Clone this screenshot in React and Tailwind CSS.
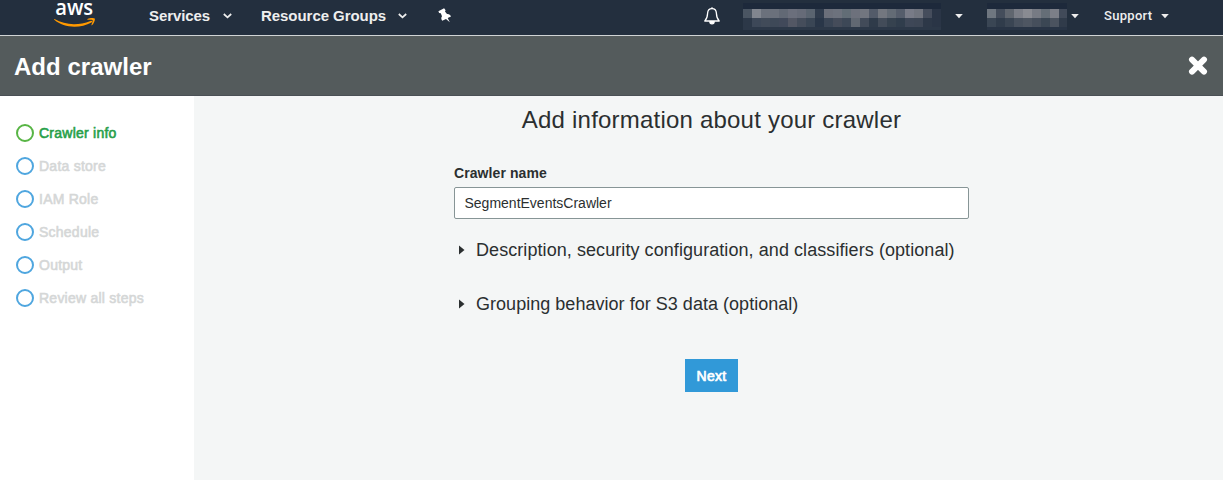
import React from "react";

const steps = ["Crawler info", "Data store", "IAM Role", "Schedule", "Output", "Review all steps"];

const accountCells = [
  ["#4a5562", "#81868f", "#6b717c", "#6b717c", "#626975", "#6b6f7c", "#666b78", "#5a6470", "#303c4d", "#6b6f7a", "#6d727d", "#626d76", "#6d717c", "#72767f", "#535b69", "#73777f", "#636b75", "#555d6b", "#787b87", "#71757f", "#454d5c", "#2a3546"],
  ["#2c3848", "#3d4858", "#414b59", "#3e4958", "#41495a", "#535764", "#454d5b", "#3a4655", "#293648", "#3a4555", "#454c5a", "#3d4857", "#616872", "#424b59", "#2f3b4a", "#434c59", "#36424f", "#303d4c", "#3e4757", "#3d4655", "#2d3848", "#2a3546"],
];

const regionCells = [
  ["#6f7780", "#444d5b", "#60666f", "#7b7e87", "#898b92", "#777b84", "#656e77", "#7c7f88", "#414a59"],
  ["#3a4654", "#303c4b", "#3a4553", "#48515e", "#4e5662", "#464f5c", "#3b4754", "#4b535f", "#303b4a"],
];

function Mosaic({ rows, className }) {
  return (
    <div className={`flex shrink-0 flex-col overflow-hidden border-t-[6px] border-b-[3px] border-t-[#1d293b] ${className}`}>
      {rows.map((row, r) => (
        <div key={r} className="flex h-[9px]">
          {row.map((color, i) => (
            <div key={i} className="h-[9px] w-[9px] shrink-0" style={{ backgroundColor: color }} />
          ))}
        </div>
      ))}
    </div>
  );
}

function Chevron({ className }) {
  return (
    <svg className={className} width="9" height="6" viewBox="0 0 9 6" fill="none" stroke="#eee" strokeWidth="1.7">
      <path d="M0.8 1 4.5 4.4 8.2 1" />
    </svg>
  );
}

function Caret({ className }) {
  return (
    <svg className={className} width="8" height="5" viewBox="0 0 8 5" fill="#eee">
      <path d="M0.2 0.1h7.6L4 4.3z" />
    </svg>
  );
}

function Section({ children, className }) {
  return (
    <div className={`flex h-6 items-center ${className}`}>
      <svg className="mr-[11px] ml-[5px] shrink-0" width="6" height="10" viewBox="0 0 6 10" fill="#2b2f30">
        <path d="M0 0.5 5.5 5 0 9.5z" />
      </svg>
      <span className="text-[18px] leading-6 whitespace-nowrap">{children}</span>
    </div>
  );
}

export default function App() {
  return (
    <div className="flex h-[480px] w-[1223px] flex-col overflow-hidden bg-[#f4f6f6] font-['Liberation_Sans',Arial,sans-serif] text-[#2b2f30]">
      <nav className="flex h-9 shrink-0 items-start border-b border-[#d0d4d5] bg-[#232f3e] text-[#eee]">
        <svg className="ml-[54px] shrink-0" width="42" height="35" viewBox="0 0 42 35">
          <text x="1.2" y="15.2" textLength="38" lengthAdjust="spacingAndGlyphs" fill="#fff" className="font-['Open_Sans',sans-serif] text-[21px] font-semibold">aws</text>
          <g fill="#f90" transform="translate(0 18.7)">
            <path d="M0.5 0.3C11 6.4 24 7.1 36.5 2.2 38 1.6 38.8 2.9 37.5 3.7 26 10 10 9.5 0.3 1.1 0 0.7 0.1 0.1 0.5 0.3z" />
            <path d="M33.5 0.4C36-1 40-.8 40.8 0 41.3 1.5 39.6 5.2 37.9 6.5 37.5 6.8 37.2 6.6 37.4 6.2 38.2 4.2 39 2 38.5 1.4 37.8.8 35.5.9 33.8 1.1 33.3 1.1 33.1.7 33.5.4z" />
          </g>
        </svg>
        <div className="ml-[53px] w-[74px] pt-[6px] text-[15px] leading-5 font-bold tracking-[-0.08px] whitespace-nowrap">Services</div>
        <Chevron className="mt-[13px]" />
        <div className="ml-[29px] w-[137px] pt-[6px] text-[15px] leading-5 font-bold tracking-[-0.05px] whitespace-nowrap">Resource Groups</div>
        <Chevron className="mt-[13px]" />
        <svg className="mt-[8px] ml-[31px] shrink-0" width="14" height="15" viewBox="0 0 14 15" fill="#fff">
          <path d="M0.4 3.2 6.1 0.3 7.6 2.3 7 3.5 9 6C10.8 5.7 12.4 6.6 13 8.4L9.7 10.1 11.8 14.2 8 10.9 4.2 12.8C3 11.2 3 9.2 4 8.2L2.8 5.2 1.1 5z" />
        </svg>
        <svg className="mt-[7px] ml-[252px] shrink-0" width="16" height="18" viewBox="0 0 16 18" fill="none" stroke="#fff" strokeWidth="1.3" strokeLinejoin="round">
          <path d="M8 1.6C5 1.6 3.7 3.8 3.6 6.2 3.5 10 3 11.7.8 14H15.2C13 11.7 12.5 10 12.4 6.2 12.3 3.8 11 1.6 8 1.6z" />
          <path d="M8 .2V2" />
          <path d="M5.8 14.6a2.2 2.2 0 0 0 4.4 0z" fill="#fff" />
        </svg>
        <Mosaic rows={accountCells} className="mt-[3px] ml-[23px] w-[198px] border-b-[#2c3848]" />
        <Caret className="mt-[14px] ml-[14px]" />
        <Mosaic rows={regionCells} className="mt-[3px] ml-[24px] w-[80px] border-b-[#283445]" />
        <Caret className="mt-[14px] ml-[4px]" />
        <div className="ml-[25px] w-[57px] pt-[6px] font-['Roboto',sans-serif] text-[13px] leading-5 font-medium tracking-[0.3px]">Support</div>
        <Caret className="mt-[14px]" />
      </nav>

      <header className="flex h-[60px] shrink-0 items-center justify-between border-b border-[#4a5055] bg-[#545b5c] pr-[15px] pl-[14px] text-white">
        <h1 className="pt-[3px] text-[24px] leading-8 font-bold tracking-[0.03px]">Add crawler</h1>
        <svg width="20" height="20" viewBox="0 0 20 20" stroke="#fff" strokeWidth="6" strokeLinecap="round">
          <path d="M4 3.6 16 15.6M16 3.6 4 15.6" />
        </svg>
      </header>

      <div className="flex min-h-0 flex-1">
        <aside className="w-[194px] shrink-0 bg-white pt-5 pl-4">
          {steps.map((step, i) => (
            <div key={step} className="flex h-[33px] items-center">
              <span className={`size-[18px] shrink-0 rounded-full border-2 ${i === 0 ? "border-[#58b545]" : "border-[#4fa6df]"}`} />
              <span className={`ml-[5px] text-[14px] leading-5 tracking-[0.24px] whitespace-nowrap [-webkit-text-stroke:0.6px] ${i === 0 ? "text-[#28a04a]" : "text-[#d5d7d7]"}`}>{step}</span>
            </div>
          ))}
        </aside>
        <main className="flex-1 pt-[9px]">
          <h2 className="ml-[6px] text-center text-[24px] leading-[30px] tracking-[0.21px]">Add information about your crawler</h2>
          <div className="ml-[260px] flex w-[515px] flex-col">
            <label className="mt-[28px] text-[14px] leading-5 font-bold tracking-[0.08px]">Crawler name</label>
            <input className="mt-1 h-8 rounded-[2px] border border-[#879596] bg-white px-[9.5px] text-[14px] outline-none" defaultValue="SegmentEventsCrawler" />
            <Section className="mt-[19px] tracking-[0.07px]">Description, security configuration, and classifiers (optional)</Section>
            <Section className="mt-[30px] tracking-[0.03px]">Grouping behavior for S3 data (optional)</Section>
            <button className="mt-[43px] h-[33px] w-[53px] self-center bg-[#3199d8] pt-px text-[14px] tracking-[0.3px] text-white [-webkit-text-stroke:0.7px]">Next</button>
          </div>
        </main>
      </div>
    </div>
  );
}
